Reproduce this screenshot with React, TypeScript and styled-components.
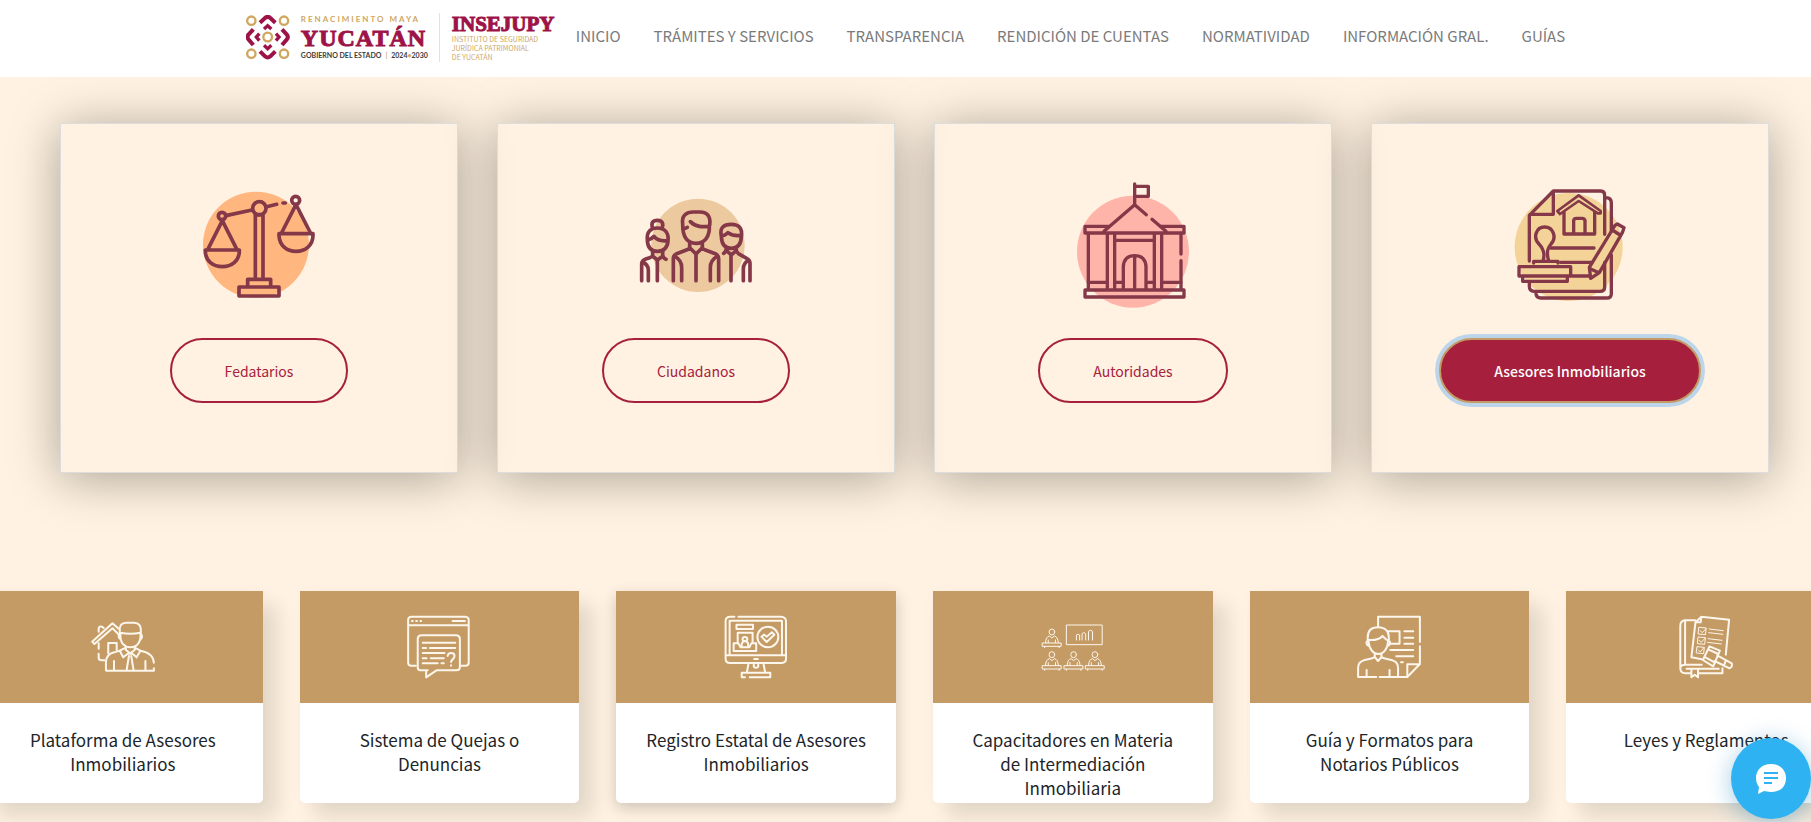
import React from 'react';
import styled, { createGlobalStyle, css } from 'styled-components';

const WINE = '#a6203d';
const GOLD = '#c49b65';

const GlobalStyle = createGlobalStyle`
  * { box-sizing: border-box; }
  body {
    margin: 0;
    background: #fff2e2;
    color: #212529;
    font-family: 'Noto Sans CJK SC', 'Noto Sans', sans-serif;
    font-size: 15px;
    overflow-x: hidden;
  }
`;

/* ---------- Header ---------- */

const Header = styled.header`
  display: flex;
  justify-content: center;
  align-items: center;
  height: 77px;
  padding-bottom: 3px;
  background: #fff;
`;

const Brand = styled.a`
  display: flex;
  align-items: center;
  gap: 11px;
  text-decoration: none;
  white-space: nowrap;
`;

const Emblem = styled.svg`
  width: 44px;
  height: 45px;
  flex: none;
`;

const StateName = styled.div`
  display: flex;
  flex-direction: column;
  width: 127px;
  font-family: Lato, sans-serif;
`;

const Motto = styled.span`
  margin-bottom: 2px;
  font-size: 8px;
  line-height: 8px;
  font-weight: 700;
  letter-spacing: 2px;
  color: #cfa75f;
`;

const Wordmark = styled.span<{ $size: number; $line: number; $track?: number }>`
  font-family: 'Liberation Serif', serif;
  font-weight: 700;
  font-size: ${(p) => p.$size}px;
  line-height: ${(p) => p.$line}px;
  letter-spacing: ${(p) => p.$track ?? 0}px;
  color: #9d1348;
  -webkit-text-stroke: 1px #9d1348;
`;

const Government = styled.span`
  display: flex;
  justify-content: space-between;
  font-size: 7px;
  line-height: 8px;
  font-weight: 700;
  color: #3c3c3b;

  i {
    font-style: normal;
    color: #cfa75f;
  }
`;

const Agency = styled.div`
  display: flex;
  flex-direction: column;
  width: 117px;
  padding-left: 12px;
  border-left: 1px solid #efdfc4;
`;

const AgencyText = styled.span`
  font-size: 7px;
  line-height: 9px;
  color: #cfa75f;
`;

const Nav = styled.nav`
  display: flex;
  gap: 33px;
  margin-left: 20px;
  padding-bottom: 2px;
`;

const NavLink = styled.a`
  color: #7b7b7b;
  text-decoration: none;
  line-height: 24px;
  white-space: nowrap;
`;

/* ---------- Audience cards ---------- */

const Audiences = styled.section`
  display: grid;
  grid-template-columns: repeat(4, 1fr);
  gap: 39px;
  padding: 46px 42px 118px 60px;
`;

const AudienceCard = styled.article`
  display: flex;
  flex-direction: column;
  align-items: center;
  gap: 23px;
  height: 350px;
  padding-top: 46px;
  border: 1px solid #ddd;
  box-shadow: 0 5px 46px rgba(10, 10, 0, 0.35);
`;

const AudienceIcon = styled.svg`
  width: 140px;
  height: 145px;
  flex: none;
  fill: none;
  stroke: #843848;
  stroke-width: 11;
  stroke-linecap: round;
  stroke-linejoin: round;
`;

const PillButton = styled.button<{ $active?: boolean }>`
  height: 65px;
  padding: 0 53px;
  border: 2px solid ${WINE};
  border-radius: 33px;
  background: transparent;
  color: ${WINE};
  font: inherit;
  font-size: 14px;
  cursor: pointer;
  ${(p) =>
    p.$active &&
    css`
      border-color: ${GOLD};
      background: ${WINE};
      color: #fff;
      font-weight: 500;
      box-shadow: 0 0 0 4px #bcd5ea;
    `}
`;

/* ---------- Service carousel ---------- */

const Carousel = styled.section`
  display: grid;
  grid-template-columns: repeat(6, 1fr);
  gap: 37px;
  margin: 0 -35px 0 -17px;
  padding-bottom: 19px;
`;

const ServiceCard = styled.article<{ $raised?: boolean }>`
  height: 212px;
  border-radius: 0 0 5px 5px;
  background: #fff;
  box-shadow: ${(p) =>
    p.$raised ? '0 5px 15px rgba(0, 0, 0, 0.2)' : '14px 14px 20px rgba(0, 0, 0, 0.11), 0 0 20px rgba(0, 0, 0, 0.02)'};
`;

const ServiceHead = styled.div`
  display: grid;
  place-items: center;
  height: 112px;
  background: ${GOLD};
`;

const ServiceIcon = styled.svg<{ $weight?: number }>`
  width: 64px;
  height: 64px;
  fill: none;
  stroke: #fdf6ec;
  stroke-width: ${(p) => p.$weight ?? 2}px;
  stroke-linecap: round;
  stroke-linejoin: round;

  * { vector-effect: non-scaling-stroke; }
`;

const ServiceTitle = styled.h2`
  margin: 0;
  padding: 25px 26px 0;
  font-size: 17px;
  line-height: 24px;
  font-weight: 400;
  text-align: center;
`;

/* ---------- Chat ---------- */

const ChatButton = styled.button`
  position: fixed;
  right: 0;
  bottom: 3px;
  display: grid;
  place-items: center;
  width: 80px;
  height: 81px;
  padding: 0;
  border: 0;
  border-radius: 50%;
  background: #2fb2f2;
  box-shadow: 0 4px 24px rgba(20, 130, 190, 0.4);
  cursor: pointer;
`;

/* ---------- Drawings ---------- */

const YucatanEmblem = () => (
  <Emblem viewBox="48 44 132 135" fill="none" aria-hidden="true">
    <g stroke="#cfa75f" strokeWidth="7">
      <circle cx="64" cy="61" r="12.5" />
      <circle cx="162" cy="61" r="12.5" />
      <circle cx="64" cy="160" r="12.5" />
      <circle cx="162" cy="160" r="12.5" />
      <circle cx="113" cy="110" r="13" />
    </g>
    <g stroke="#9d1348" strokeWidth="12">
      <path d="M90 67 L105 53 Q113 46 121 53 L136 67" />
      <path d="M90 153 L105 168 Q113 175 121 168 L136 153" />
      <path d="M70 87 L56 102 Q49 110 56 118 L70 134" />
      <path d="M156 87 L170 102 Q177 110 170 118 L156 134" />
      <path d="M102 86 L113 76 L124 86 M102 135 L113 145 L124 135 M88 100 L79 110 L88 121 M138 100 L147 110 L138 121" strokeWidth="10" />
    </g>
  </Emblem>
);

const ScalesIcon = () => (
  <AudienceIcon viewBox="-3 0 420 435" aria-hidden="true">
    <circle cx="198" cy="224" r="159" fill="#ffb67f" stroke="none" />
    <path d="M46 242 C46 274 70 290 97 290 C124 290 148 274 148 242 M267 196 C268 226 290 244 318 244 C346 244 369 226 369 196" />
    <path d="M46 240 H148 M267 191 H369 M97 152 L55 235 M97 152 L139 235 M318 104 L276 186 M318 104 L360 186" />
    <circle cx="96" cy="138" r="11" />
    <circle cx="208" cy="115" r="20" />
    <circle cx="317" cy="91" r="12" />
    <path d="M111 136 L186 120 M230 110 L260 103 M279 99 H286 M196 135 V322 M219 135 V322 M196 134 H219" />
    <path d="M173 347 V328 H242 V347 M147 351 H267 V378 H147 Z" />
  </AudienceIcon>
);

const CitizensIcon = () => (
  <AudienceIcon viewBox="-12 -30 420 435" aria-hidden="true">
    <circle cx="204" cy="196" r="140" fill="#ecc99f" stroke="none" />
    <path d="M158 132 C154 106 170 96 190 96 H210 C232 96 243 110 239 136 M158 130 C157 175 174 190 198 190 C224 190 240 170 238 136 M181 125 C198 142 218 141 238 139 M159 148 L172 142" />
    <path d="M179 190 V202 Q178 207 171 209 L140 221 Q130 225 130 235 V302 M217 190 V202 Q218 207 226 210 L256 221 Q266 226 266 236 V302 M180 204 L198 222 L216 204 M198 224 V302 M133 228 C147 236 155 246 155 262 V302 M263 228 C249 236 241 246 241 262 V302" />
    <path d="M68 146 C62 127 69 121 82 121 C96 121 102 130 96 145 M52 181 C49 155 62 144 82 144 C104 144 117 158 114 182 C113 203 101 214 83 214 C65 214 53 203 52 181 M54 180 C62 178 67 174 72 169 C80 179 94 184 112 182" />
    <path d="M68 214 V226 Q66 231 59 233 L45 238 Q35 242 35 252 V302 M98 214 V226 Q101 236 108 238 M69 229 L82 240 L96 230 M82 241 V302 M38 246 C50 252 55 260 55 270 V302" />
    <path d="M274 169 C268 142 282 133 304 133 C326 133 338 144 334 170 C333 195 322 205 304 205 C286 205 275 195 274 169 Z M275 167 C284 168 288 163 294 158 C306 166 318 168 333 166" />
    <path d="M289 205 Q289 216 281 220 M318 205 Q319 216 325 221 L350 235 Q360 240 360 250 V302 M289 211 L304 225 L319 211 M303 226 V302 M357 241 C344 246 340 255 340 268 V302" />
  </AudienceIcon>
);

const CourthouseIcon = () => (
  <AudienceIcon viewBox="-6 0 420 435" aria-hidden="true">
    <circle cx="204" cy="245" r="168" fill="#ffb4aa" stroke="none" />
    <g strokeWidth="10">
      <path d="M209 42 V104 M209 49 H250 V79 H209 M117 184 L209 104 L244 134 M261 148 L303 184" />
      <path d="M130 169 H60 V189 H357 V169 H287" />
      <path d="M70 190 V357 M348 190 V252 M348 272 V357 M127 193 V357 M149 193 V357 M268 193 V357 M290 193 V357 M151 211 H266" />
      <path d="M70 337 H127 M149 337 H172 M245 337 H268 M290 337 H348 M175 357 V290 Q177 257 209 257 Q241 257 243 290 V357 M209 257 V357 M60 360 H357 V381 H60 Z" />
    </g>
  </AudienceIcon>
);

const DeedIcon = () => (
  <AudienceIcon viewBox="0 -15 420 435" aria-hidden="true">
    <circle cx="206" cy="216" r="162" fill="#f4d398" stroke="none" />
    <g strokeWidth="10">
      <path d="M88 258 V121 L160 48 H302 Q314 48 314 62 V178 M160 50 V118 H90 M318 68 Q334 68 334 84 V168 M314 262 V336 Q314 349 300 349 H102 Q88 349 88 334 V325 M334 240 V356 Q334 369 320 369 H122 Q110 369 108 357" />
      <path d="M192 112 V177 H284 V112 M221 175 V136 Q222 130 230 130 H246 Q254 130 255 137 V175 M152 219 H282 M182 262 H276 M217 303 H268" />
      <path d="M172 108 L236 61 L302 108 V115 H294 L236 78 L180 117 Z" strokeWidth="8" />
      <path d="M130 254 Q134 238 129 226 Q126 216 117 207 C98 188 108 156 134 156 C160 156 171 188 153 207 Q145 216 143 226 Q141 238 145 254 M101 264 V259 H174 V264" />
      <path d="M57 275 H212 V303 H57 Z M68 309 V319 H202 V309" />
      <path d="M345 151 L352 147 L372 158 L367 173 L298 293 L272 310 L268 277 L342 156 Z M337 165 L360 180 M270 281 L297 293" />
    </g>
  </AudienceIcon>
);

const AgentIcon = () => (
  <ServiceIcon viewBox="237 105 167 192" preserveAspectRatio="none" aria-hidden="true">
    <path d="M312 165 V145 Q313 128 330 128 H350 Q367 130 367 148 V166 M314 158 Q340 164 366 158 M314 162 C312 190 325 202 340 202 C356 202 368 188 366 162 M311 163 Q307 168 312 176 M368 163 Q372 168 368 176" />
    <path d="M240 185 L293 130 L309 146 M240 185 L246 192 L293 145 L308 162 M257 155 V145 Q258 138 266 140 L270 144 M257 190 V206 M257 221 V234 Q257 241 266 241 H272 M282 220 V189 H304 V210" />
    <path d="M276 271 V245 Q278 222 298 217 L312 212 L328 203 V210 L339 220 L351 210 V203 L366 212 C390 217 400 228 401 248 M401 265 V272 H277 M297 243 V270 M379 243 V270 M312 212 L321 232 L332 222 M366 212 L356 232 L346 222 M333 221 H345 M336 228 L330 270 M342 228 L348 270" />
  </ServiceIcon>
);

const ComplaintIcon = () => (
  <ServiceIcon viewBox="1065 105 167 192" preserveAspectRatio="none" aria-hidden="true">
    <path d="M1088 257 H1076 Q1068 257 1068 248 V118 Q1069 110 1077 110 H1217 Q1226 111 1226 119 V248 Q1226 257 1217 257 H1207 M1068 136 H1226" />
    <path d="M1078 123 H1080 M1089 123 H1091 M1100 123 H1102 M1184 123 H1216" />
    <path d="M1119 271 H1100 Q1093 271 1093 262 V176 Q1094 166 1103 166 H1194 Q1203 167 1203 177 V262 Q1203 271 1194 271 H1142 L1115 292 V274" />
    <path d="M1106 188 H1191 M1106 204 H1115 M1125 204 H1191 M1106 219 H1163 M1106 235 H1116 M1127 235 H1161 M1106 250 H1145 M1155 250 H1161 M1171 228 C1172 216 1189 216 1189 228 C1189 238 1180 238 1180 246 M1180 256 V257" />
  </ServiceIcon>
);

const RegistryIcon = () => (
  <ServiceIcon viewBox="309 105 159 192" preserveAspectRatio="none" aria-hidden="true">
    <path d="M335 110 H323 Q313 112 313 122 V238 Q314 249 324 249 H452 Q463 248 463 238 V122 Q462 111 451 110 H345 M313 226 H463 M323 225 V122 H453 V225" />
    <path d="M340 134 H381 V147 H340 Z M343 189 V158 H380 V189 M333 190 H345 L350 202 H372 L377 190 H389 V213 H333 Z M353 202 V192 Q355 184 361 184 Q368 184 369 192 V202" />
    <circle cx="361" cy="177" r="6" />
    <ellipse cx="418" cy="171" rx="26" ry="31" />
    <path d="M402 170 L408 164 L415 170 L428 157 L434 164 L415 186 Z M384 237 H393 M370 250 L366 276 M407 250 L411 276 M383 250 V260 Q388 267 394 260 V250 M361 292 H353 V278 H424 V292 H373" />
  </ServiceIcon>
);

const Trainee = ({ x, y }: { x: number; y: number }) => (
  <g transform={`translate(${x} ${y})`}>
    <ellipse cx="0" cy="0" rx="7" ry="9" />
    <path d="M-16 32 Q-15 14 -6 12 L0 18 L6 12 Q15 14 16 32 M-9 24 V32 M9 24 V32 M-23 33 H23 V43 H-23 Z M-18 44 V47 M18 44 V47" />
  </g>
);

const TrainingIcon = () => (
  <ServiceIcon viewBox="1097 105 159 192" preserveAspectRatio="none" $weight={1} aria-hidden="true">
    <Trainee x={1124} y={156} />
    <Trainee x={1124} y={224} />
    <Trainee x={1178} y={224} />
    <Trainee x={1231} y={224} />
    <path d="M1161 135 H1249 V194 H1161 Z M1185 180 V165 Q1189 160 1193 165 V180 M1199 180 V161 Q1203 154 1208 161 V180 M1215 180 V154 Q1220 147 1225 154 V180" />
  </ServiceIcon>
);

const NotaryIcon = () => (
  <ServiceIcon viewBox="344 105 173 192" preserveAspectRatio="none" aria-hidden="true">
    <path d="M401 140 V110 H514 V186 M514 199 V252 L480 291 H405 M514 253 H480 V290" />
    <path d="M427 154 H459 V191 H434 M472 154 H496 M472 173 H496 M472 191 H496 M434 210 H496 M450 229 H496 M463 247 H468" />
    <path d="M373 180 V172 C373 152 384 142 401 142 C418 142 430 152 430 172 V180 M376 180 Q402 182 413 168 Q419 175 425 180 M375 181 C376 207 388 222 401 222 C416 222 427 207 428 181 M374 182 Q367 184 371 194 L376 198 M429 182 Q436 184 432 194 L427 198" />
    <path d="M392 221 V230 Q390 234 380 236 L362 241 Q347 246 347 264 V291 H396 M410 221 V230 Q412 234 422 236 L440 241 Q455 246 455 264 V290 M391 230 L401 243 L411 230 M370 270 V290 M432 270 V290" />
  </ServiceIcon>
);

const LawIcon = () => (
  <ServiceIcon viewBox="1199 105 173 192" preserveAspectRatio="none" aria-hidden="true">
    <path d="M1256 121 H1228 Q1216 123 1216 138 V266 Q1217 279 1229 280 H1244 M1266 280 H1330 V265 M1216 262 Q1219 254 1229 254 H1274 M1229 254 V124 M1233 266 H1320 M1246 268 V292 L1255 284 L1264 292 V268" />
    <path d="M1257 127 L1273 110 L1348 119 L1339 224 M1273 110 L1271 127 L1257 127 L1246 232 L1274 238" />
    <g strokeWidth="1">
      <path d="M1267 142 L1286 144 L1284 164 L1265 162 Z M1265 171 L1284 173 L1282 193 L1263 191 Z M1262 200 L1281 202 L1279 221 L1260 219 Z" />
      <path d="M1270 152 L1275 158 L1286 146 M1267 181 L1272 187 L1283 175 M1265 210 L1270 216 L1279 204" />
      <path d="M1294 147 L1332 152 M1293 158 L1331 163 M1291 176 L1329 181 M1290 187 L1327 192" />
    </g>
    <path d="M1295 199 L1323 212 L1305 259 L1277 240 Z M1285 233 L1310 248 M1291 208 L1319 222 M1316 226 L1355 250 Q1358 260 1349 265 L1309 243 M1339 242 L1334 256" />
  </ServiceIcon>
);

const ChatIcon = () => (
  <svg width="32" height="32" viewBox="0 0 32 32" aria-hidden="true">
    <path d="M16 1 C25 1 31 7 31 15 C31 24 25 29 16 29 C13 29 11 28 9 28 L3 31 L4 24 C2 21 1 19 1 15 C1 7 7 1 16 1 Z" fill="#fff" />
    <path d="M9 10 H23 M9 15 H23 M9 20 H17" stroke="#2fb2f2" strokeWidth="2" />
  </svg>
);

/* ---------- Page ---------- */

const navItems = ['INICIO', 'TRÁMITES Y SERVICIOS', 'TRANSPARENCIA', 'RENDICIÓN DE CUENTAS', 'NORMATIVIDAD', 'INFORMACIÓN GRAL.', 'GUÍAS'];

const audiences = [
  { label: 'Fedatarios', Icon: ScalesIcon },
  { label: 'Ciudadanos', Icon: CitizensIcon },
  { label: 'Autoridades', Icon: CourthouseIcon },
  { label: 'Asesores Inmobiliarios', Icon: DeedIcon, active: true },
];

const services = [
  { title: 'Plataforma de Asesores Inmobiliarios', Icon: AgentIcon },
  { title: 'Sistema de Quejas o Denuncias', Icon: ComplaintIcon },
  { title: 'Registro Estatal de Asesores Inmobiliarios', Icon: RegistryIcon, raised: true },
  { title: 'Capacitadores en Materia de\u00a0Intermediación Inmobiliaria', Icon: TrainingIcon },
  { title: 'Guía y Formatos para Notarios Públicos', Icon: NotaryIcon },
  { title: 'Leyes y Reglamentos', Icon: LawIcon },
];

export default function App() {
  return (
    <>
      <GlobalStyle />
      <Header>
        <Brand href="#">
          <YucatanEmblem />
          <StateName>
            <Motto>RENACIMIENTO MAYA</Motto>
            <Wordmark $size={24} $line={26} $track={1}>YUCATÁN</Wordmark>
            <Government>
              <span>GOBIERNO DEL ESTADO</span>
              <i>|</i>
              <span>2024<i>•</i>2030</span>
            </Government>
          </StateName>
          <Agency>
            <Wordmark $size={21} $line={22}>INSEJUPY</Wordmark>
            <AgencyText>INSTITUTO DE SEGURIDAD</AgencyText>
            <AgencyText>JURÍDICA PATRIMONIAL</AgencyText>
            <AgencyText>DE YUCATÁN</AgencyText>
          </Agency>
        </Brand>
        <Nav>
          {navItems.map((item) => (
            <NavLink key={item} href="#">{item}</NavLink>
          ))}
        </Nav>
      </Header>
      <main>
        <Audiences>
          {audiences.map(({ label, Icon, active }) => (
            <AudienceCard key={label}>
              <Icon />
              <PillButton type="button" $active={active}>{label}</PillButton>
            </AudienceCard>
          ))}
        </Audiences>
        <Carousel>
          {services.map(({ title, Icon, raised }) => (
            <ServiceCard key={title} $raised={raised}>
              <ServiceHead><Icon /></ServiceHead>
              <ServiceTitle>{title}</ServiceTitle>
            </ServiceCard>
          ))}
        </Carousel>
      </main>
      <ChatButton type="button" aria-label="Abrir chat"><ChatIcon /></ChatButton>
    </>
  );
}
